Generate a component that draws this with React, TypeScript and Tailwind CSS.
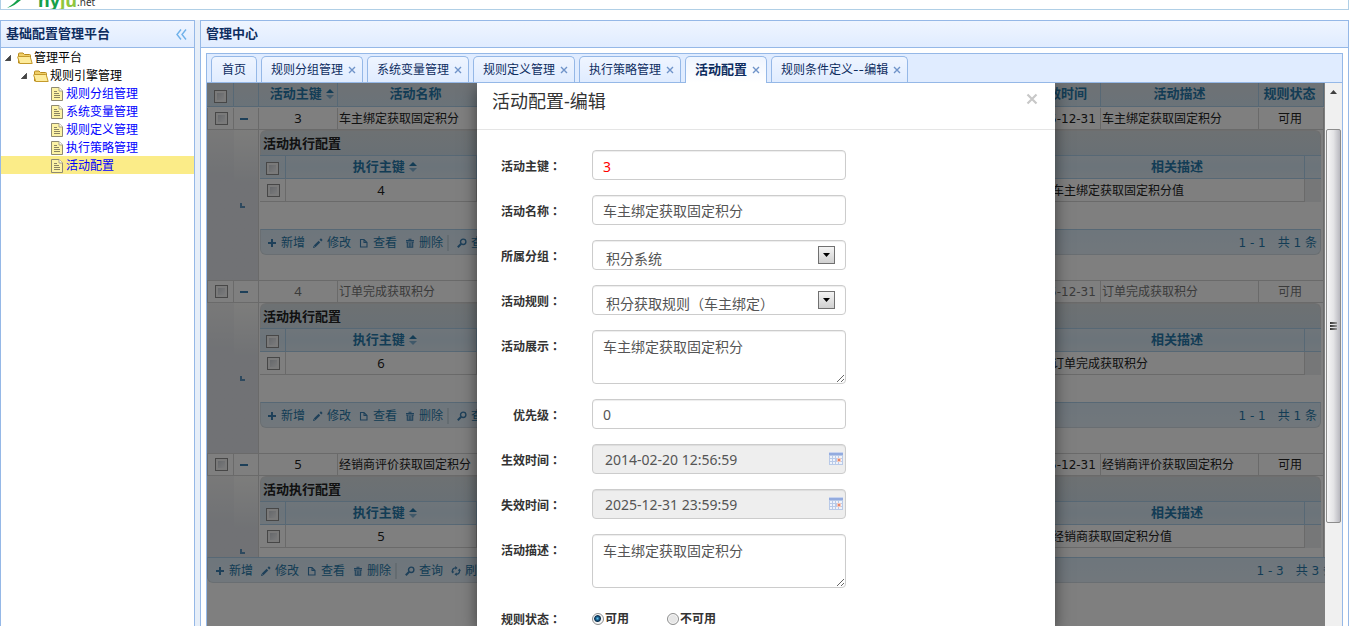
import React from "react";

const CJK = "font-['Noto_Sans','Noto_Sans_CJK_SC',sans-serif]";
const NUM = "font-['DejaVu_Sans','Noto_Sans_CJK_SC',sans-serif]";

type IconName = "plus" | "pencil" | "page" | "trash" | "search" | "refresh";

function ToolIcon({ name }: { name: IconName }) {
  return (
    <svg width="10" height="10" viewBox="0 0 10 10" fill="none" stroke="#3d80b3" className="shrink-0" aria-hidden="true">
      {name === "plus" && <path d="M5 1v8M1 5h8" strokeWidth="2" />}
      {name === "pencil" && (
        <>
          <path d="M1.6 8.4L6.4 3.6" strokeWidth="2.2" />
          <path d="M7.4 2.6L8.8 1.2" strokeWidth="2.4" />
          <path d="M0 10l.6-2.2L2.2 9.4z" fill="#3d80b3" stroke="none" />
        </>
      )}
      {name === "page" && <path d="M1.5 1.5h3.500L8 4.500v4.500h-6.500zM5 1.500v3h3" strokeWidth="1.1" />}
      {name === "trash" && (
        <>
          <path d="M3.5 1.2h3M1 2.5h8M1 4h8" strokeWidth="1.1" />
          <path d="M2.3 4v5.2h5.4V4M4.2 5v4M5.9 5v4" strokeWidth="1.1" />
        </>
      )}
      {name === "search" && (
        <>
          <circle cx="6.2" cy="3.8" r="2.7" strokeWidth="1.4" />
          <path d="M4.2 5.8L.8 9.2" strokeWidth="2" />
        </>
      )}
      {name === "refresh" && (
        <>
          <path d="M4.6 1.8C2 1.9 1 4 1.6 6.2M5.4 8.4C8 8.2 9 6 8.4 3.9" strokeWidth="1.3" />
          <path d="M4.2 0v3.8L6.6 1.9zM5.8 10V6.4L3.4 8.3zM0 5.4h3.4L1.8 7.6zM10 4.8H6.8l1.6-2.2z" fill="#3d80b3" stroke="none" />
        </>
      )}
    </svg>
  );
}

function Tool({ icon, label }: { icon: IconName; label: string }) {
  return (
    <button type="button" className="flex h-5 shrink-0 items-center gap-1 px-1 whitespace-nowrap text-[#2779aa]">
      <ToolIcon name={icon} />
      {label}
    </button>
  );
}

function Pager({ range, total, outer }: { range: string; total: number; outer?: boolean }) {
  return (
    <div
      className={
        "flex h-[26px] items-center rounded-b-md border border-[#d3dde4] border-t-[#aed0ea] bg-linear-to-b from-[#dcecf8] to-[#e3eff8] pt-px text-xs text-[#2779aa] " +
        (outer ? "w-[calc(100%+16px)] pr-1 pl-[3px]" : "pr-[3px] pl-[2px]")
      }
    >
      <Tool icon="plus" label="新增" />
      <Tool icon="pencil" label="修改" />
      <Tool icon="page" label="查看" />
      <Tool icon="trash" label="删除" />
      <span className="mr-1 h-4 w-[2px] bg-[#c9d8e2]" />
      <Tool icon="search" label="查询" />
      <Tool icon="refresh" label="刷新" />
      <div className={"ml-auto flex gap-3 " + NUM}>
        <span>{range}</span>
        <span>{"共 " + total + " 条"}</span>
      </div>
    </div>
  );
}

function Check({ label }: { label: string }) {
  return (
    <input
      type="checkbox"
      aria-label={label}
      className="mx-auto block size-[13px] appearance-none border border-[#8e8f8f] bg-linear-to-br from-[#c3c8d0] to-[#ffffff] shadow-[inset_0_0_0_2px_#f4f4f4]"
    />
  );
}

function Sort() {
  return (
    <svg width="8" height="10" viewBox="0 0 8 10" className="ml-px inline-block" aria-hidden="true">
      <path d="M4 0l4 4H0z" fill="#2779aa" />
      <path d="M4 10L0 6h8z" fill="#7fb0d3" />
    </svg>
  );
}

interface Activity {
  id: number;
  name: string;
  until: string;
  sub: number;
  note: string;
  muted?: boolean;
}

const activities: Activity[] = [
  { id: 3, name: "车主绑定获取固定积分", until: "2025-12-31", sub: 4, note: "车主绑定获取固定积分值" },
  { id: 4, name: "订单完成获取积分", until: "2025-12-31", sub: 6, note: "订单完成获取积分", muted: true },
  { id: 5, name: "经销商评价获取固定积分", until: "2025-12-31", sub: 5, note: "经销商获取固定积分值" },
];

const head = "border-r border-b border-[#aed0ea] text-[13px] leading-[18px] font-bold text-[#2779aa] whitespace-nowrap";
const cell = "border-r border-b border-[#d4d4d4] whitespace-nowrap";

function GridCols() {
  return (
    <colgroup>
      <col className="w-[27px]" />
      <col className="w-[25px]" />
      <col className="w-[79px]" />
      <col className="w-[156px]" />
      <col />
      <col className="w-[79px]" />
      <col className="w-[158px]" />
      <col className="w-[65px]" />
    </colgroup>
  );
}

function SubGrid({ row }: { row: Activity }) {
  return (
    <div className="h-[150px] overflow-hidden pr-[2px] pl-px">
      <div className="h-[25px] rounded-t-md border border-b-0 border-[#ddd] bg-linear-to-b from-[#dbe2e6] to-[#d3e1ea] px-[2px] text-[13px] leading-6 font-bold text-[#222]">
        活动执行配置
      </div>
      <table className="w-full table-fixed border-separate border-spacing-0 text-xs">
        <colgroup>
          <col className="w-[26px]" />
          <col className="w-[191px]" />
          <col />
          <col className="w-[255px]" />
          <col className="w-[16px]" />
        </colgroup>
        <thead>
          <tr className="h-6 bg-linear-to-b from-[#dfebf4] via-[#d7e8f4] to-[#e0ecf5]">
            <th className={head + " border-t px-0 pt-[2px] pb-0"}><Check label="选择全部执行配置" /></th>
            <th className={head + " border-t pt-0 pr-0 pb-[3px] pl-2"}>执行主键 <Sort /></th>
            <th className={head + " border-t p-0"}></th>
            <th className={head + " border-t px-0 pt-0 pb-[3px]"}>相关描述</th>
            <th className="border-t border-b border-[#aed0ea] p-0"></th>
          </tr>
        </thead>
        <tbody>
          <tr className="h-[23px]">
            <td className={cell + " pt-0 pr-0 pb-0 pl-[2px]"}><Check label={"选择执行配置 " + row.sub} /></td>
            <td className={cell + " px-0 pt-[2px] pb-0 text-center text-[13px]"}>{row.sub}</td>
            <td className={cell + " p-0"}></td>
            <td className={cell + " px-[2px] pt-[2px] pb-0"}>{row.note}</td>
            <td className="bg-[#eceef0] p-0"></td>
          </tr>
        </tbody>
      </table>
      <div className="h-[27px]" />
      <Pager range="1 - 1" total={1} />
    </div>
  );
}

function Grid() {
  return (
    <div className="mr-px text-xs text-[#222]">
      <table className="w-full table-fixed border-separate border-spacing-0">
        <GridCols />
        <thead>
          <tr className="h-6 bg-linear-to-b from-[#dde4ea] to-[#d5e6f2]">
            <th className={head + " px-0 pt-1 pb-0"}><Check label="选择全部活动" /></th>
            <th className={head + " p-0"}></th>
            <th className={head + " pt-0 pr-0 pb-[3px] pl-2"}>活动主键 <Sort /></th>
            <th className={head + " px-0 pt-0 pb-[3px]"}>活动名称</th>
            <th className={head + " p-0"}></th>
            <th className={head + " px-0 pt-0 pb-[3px]"}>失效时间</th>
            <th className={head + " px-0 pt-0 pb-[3px]"}>活动描述</th>
            <th className={head + " pt-0 pr-[3px] pb-[3px] pl-0"}>规则状态</th>
          </tr>
        </thead>
      </table>
      <div className="h-[450px] overflow-hidden pt-px">
        <table className="w-full table-fixed border-separate border-spacing-0">
          <GridCols />
          <tbody>
            {activities.map((row) => (
              <React.Fragment key={row.id}>
                <tr className={row.muted ? "h-[22px] text-[#777]" : "h-[22px]"}>
                  <td className={cell + " border-l border-l-[#d4d4d4] pt-0 pr-0 pb-0 pl-px"}><Check label={"选择活动 " + row.id} /></td>
                  <td className={cell + " pt-0 pr-1 pb-0 pl-0"}>
                    <button type="button" aria-label="收起" className="mx-auto block h-[2px] w-2 bg-[#3d80b3]" />
                  </td>
                  <td className={cell + " p-0 text-center text-[13px]"}>{row.id}</td>
                  <td className={cell + " px-px pt-px pb-0"}>{row.name}</td>
                  <td className={cell + " p-0"}></td>
                  <td className={cell + " p-0 text-center " + NUM}>{row.until}</td>
                  <td className={cell + " px-px pt-px pb-0"}>{row.name}</td>
                  <td className={cell + " pt-px pr-[2px] pb-0 pl-0 text-center"}>可用</td>
                </tr>
                <tr>
                  <td className="border-b border-[#d4d4d4] bg-linear-to-b from-[#f2f2f2] to-[#e2e5ea] to-30% p-0"></td>
                  <td className="border-r border-b border-[#d4d4d4] bg-linear-to-b from-[#fafaf8] to-[#e2e5ea] to-35% pt-0 pr-[13px] pb-0 pl-0">
                    <svg width="5" height="5" viewBox="0 0 5 5" className="ml-auto block" aria-hidden="true">
                      <path d="M0 0h2v3h3v2H0z" fill="#5c93bd" />
                    </svg>
                  </td>
                  <td colSpan={6} className="border-r border-b border-[#d4d4d4] p-0">
                    <SubGrid row={row} />
                  </td>
                </tr>
              </React.Fragment>
            ))}
          </tbody>
        </table>
      </div>
      <Pager range="1 - 3" total={3} outer />
    </div>
  );
}

const field =
  "block w-full rounded border border-[#ccc] bg-white px-[10px] text-sm text-[#555] shadow-[inset_0_1px_1px_rgba(0,0,0,0.075)] outline-none";

function Row({ label, id, children }: { label: string; id: string; children: React.ReactNode }) {
  return (
    <div className="flex">
      <label htmlFor={id} className="w-[69px] shrink-0 pt-[6px] text-right text-xs leading-5 font-bold whitespace-nowrap text-[#333]">
        {label}
        <span className="font-['Noto_Sans_CJK_TC',sans-serif]">：</span>
      </label>
      <div className="relative ml-[31px] w-[254px]">{children}</div>
    </div>
  );
}

function SelectBox({ id, value }: { id: string; value: string }) {
  return (
    <>
      <select
        id={id}
        className={field + " h-[30px] appearance-none pt-[5px] pl-[13px] font-['Noto_Sans_CJK_TC','Noto_Sans_CJK_SC',sans-serif]"}
      >
        <option>{value}</option>
      </select>
      <span className="pointer-events-none absolute top-[6px] right-[11px] flex h-[18px] w-[17px] items-center justify-center border border-[#707070] bg-linear-to-b from-[#f4f4f4] to-[#d0d0d0]">
        <svg width="7" height="4" viewBox="0 0 7 4" aria-hidden="true">
          <path d="M0 0h7L3.5 4z" fill="#000" />
        </svg>
      </span>
    </>
  );
}

function DateBox({ id, value }: { id: string; value: string }) {
  return (
    <>
      <input id={id} readOnly defaultValue={value} className={field + " h-[30px] bg-[#eee]! pl-3"} />
      <svg width="14" height="13" viewBox="0 0 14 13" className="pointer-events-none absolute top-2 right-[3px]" aria-hidden="true">
        <path d="M0 0h14v13H0z" fill="#b9cae8" />
        <path d="M0 0h14v3H0z" fill="#93abdf" />
        <path d="M0 0h14v1H0z" fill="#c8d4ef" />
        <path d="M1 4h2v2H1zM4 4h2v2H4zM7 4h2v2H7zM10 4h3v2h-3zM1 7h2v2H1zM4 7h2v2H4zM11 7h2v2h-2zM1 10h2v2H1zM4 10h2v2H4zM7 10h2v2H7zM10 10h3v2h-3z" fill="#eef3fb" />
        <path d="M8 6h4v4H8z" fill="#f3c9bd" />
        <path d="M9 7h2v2H9z" fill="#e8866a" />
      </svg>
    </>
  );
}

function Radio({ id, label, checked }: { id: string; label: string; checked?: boolean }) {
  return (
    <label htmlFor={id} className="flex w-[75px] items-center gap-px text-xs leading-5 font-bold whitespace-nowrap text-[#333]">
      <input
        id={id}
        type="radio"
        name="status"
        defaultChecked={checked}
        className="size-3 appearance-none rounded-full border border-[#8e8f8f] bg-[#e6e6e6] shadow-[inset_0_0_0_1px_#f8f8f8] checked:bg-[radial-gradient(circle_at_45%_45%,#5fc4ee_0,#14507c_2px,#0b2f4d_3px,#f2f2f2_4px)]"
      />
      {label}
    </label>
  );
}

function EditDialog() {
  return (
    <section
      role="dialog"
      aria-labelledby="dialog-title"
      className="absolute inset-y-0 left-1/2 w-[578px] -translate-x-1/2 overflow-visible bg-white shadow-[0_5px_15px_rgba(0,0,0,0.5)]"
    >
      <header className="flex h-[47px] items-start justify-between border-b border-[#e5e5e5] pr-[17px] pl-[15px]">
        <h2 id="dialog-title" className="pt-[6px] text-lg leading-6 text-[#333]">活动配置-编辑</h2>
        <button type="button" aria-label="关闭" className="mt-[10px]">
          <svg width="12" height="12" viewBox="0 0 12 12" aria-hidden="true">
            <path d="M1.5 1.5l9 9M10.500 1.500l-9 9" stroke="#c8c8c8" strokeWidth="2.200" />
          </svg>
        </button>
      </header>
      <form className="flex flex-col gap-[15px] px-[15px] pt-5">
        <Row label="活动主键" id="key">
          <input id="key" readOnly defaultValue="3" className={field + " h-[30px] pt-[2px] text-[#ff0000]!"} />
        </Row>
        <Row label="活动名称" id="name">
          <input id="name" defaultValue="车主绑定获取固定积分" className={field + " h-[30px]"} />
        </Row>
        <Row label="所属分组" id="group">
          <SelectBox id="group" value="积分系统" />
        </Row>
        <Row label="活动规则" id="rule">
          <SelectBox id="rule" value="积分获取规则（车主绑定）" />
        </Row>
        <Row label="活动展示" id="show">
          <textarea id="show" defaultValue="车主绑定获取固定积分" className={field + " h-[54px] py-[6px] leading-5"} />
        </Row>
        <Row label="优先级" id="priority">
          <input id="priority" defaultValue="0" className={field + " h-[30px]"} />
        </Row>
        <Row label="生效时间" id="start">
          <DateBox id="start" value="2014-02-20 12:56:59" />
        </Row>
        <Row label="失效时间" id="end">
          <DateBox id="end" value="2025-12-31 23:59:59" />
        </Row>
        <Row label="活动描述" id="desc">
          <textarea id="desc" defaultValue="车主绑定获取固定积分" className={field + " h-[54px] py-[6px] leading-5"} />
        </Row>
        <Row label="规则状态" id="enabled">
          <div className="flex pt-[6px]">
            <Radio id="enabled" label="可用" checked />
            <Radio id="disabled" label="不可用" />
          </div>
        </Row>
      </form>
    </section>
  );
}

function Tab({ label, active, fixed }: { label: string; active?: boolean; fixed?: boolean }) {
  return (
    <div
      className={
        "flex shrink-0 items-center gap-[5px] rounded-t-[5px] border border-[#95b8e7] text-[#0e2d5f] " +
        (active
          ? "-mb-px h-[27px] border-b-0 bg-linear-to-b from-[#eff5ff] to-white pb-px text-[13px] font-bold "
          : "h-[26px] border-b-0 bg-linear-to-b from-[#eff5ff] to-[#e0ecff] text-xs ") +
        (fixed ? "px-[10px]" : "pr-[6px] pl-[9px]")
      }
    >
      <button type="button" role="tab" aria-selected={!!active} className="whitespace-nowrap">{label}</button>
      {!fixed && (
        <button type="button" aria-label={"关闭 " + label}>
          <svg width="8" height="8" viewBox="0 0 8 8" aria-hidden="true">
            <path d="M1 1l6 6M7 1L1 7" stroke="#6f93c9" strokeWidth="1.4" />
          </svg>
        </button>
      )}
    </div>
  );
}

function ScrollBar() {
  return (
    <div className="flex w-[17px] shrink-0 flex-col items-center bg-[#f0f0f0]" aria-hidden="true">
      <div className="flex h-[46px] items-start pt-[7px]">
        <svg width="7" height="4" viewBox="0 0 7 4">
          <path d="M0 4h7L3.5 0z" fill="#404040" />
        </svg>
      </div>
      <div className="flex h-[394px] w-[15px] flex-col items-center justify-center gap-px rounded-xs border border-[#8c8c8c] bg-linear-to-r from-[#f6f6f6] via-[#e4e4e6] to-[#b8b8bf]">
        <span className="h-[2px] w-[7px] bg-linear-to-r from-[#333] to-[#999]" />
        <span className="h-[2px] w-[7px] bg-linear-to-r from-[#333] to-[#999]" />
        <span className="h-[2px] w-[7px] bg-linear-to-r from-[#333] to-[#999]" />
      </div>
    </div>
  );
}

function Arrow() {
  return (
    <svg width="6" height="6" viewBox="0 0 6 6" className="shrink-0" aria-hidden="true">
      <path d="M5.700 .3v5.400H.3z" fill="#444" stroke="#222" strokeWidth=".6" />
    </svg>
  );
}

function Folder() {
  return (
    <svg width="16" height="14" viewBox="0 0 16 14" className="shrink-0" aria-hidden="true">
      <path d="M1.500 12V3q0-1 1-1h3.500l1.500 1.500h5q1 0 1 1V12z" fill="#f0cf68" stroke="#b88a1d" />
      <path d="M2.800 12.500L.7 6.300q-.2-.8.7-.8h11q.8 0 1 .8l1.800 6.200z" fill="#fdeb9b" stroke="#c49a2c" />
    </svg>
  );
}

function Doc() {
  return (
    <svg width="12" height="14" viewBox="0 0 12 14" className="shrink-0" aria-hidden="true">
      <path d="M.5.5h7.500L11.500 4v9.500H.5z" fill="#fdf3a6" stroke="#8f8a72" />
      <path d="M8 .5V4h3.500" fill="#fff" stroke="#a8a284" />
      <path d="M3 4.500h3M3 6.500h5M3 8.500h6M3 10.500h6" stroke="#8a8462" />
    </svg>
  );
}

const menu = ["规则分组管理", "系统变量管理", "规则定义管理", "执行策略管理", "活动配置"];

const panelHead =
  "flex h-[27px] shrink-0 items-center justify-between border-b border-[#95b8e7] bg-linear-to-b from-[#eff5ff] to-[#e0ecff] px-[5px] text-[13px] font-bold text-[#0e2d5f]";

export default function App() {
  return (
    <div className={"flex h-screen flex-col overflow-hidden bg-white text-xs " + CJK}>
      <header className="flex h-[10px] shrink-0 items-end overflow-hidden border border-t-0 border-[#b0cfe6] pl-[6px]">
        <svg width="31" height="9" viewBox="0 0 31 9" className="shrink-0" aria-hidden="true">
          <path d="M0 8C5 5 8 2 10 0h4C10 3.500 5 7 0 8z" fill="#14a04a" />
        </svg>
        <span className="text-lg leading-[18px] font-bold text-[#14a04a]">
          hy<span className="text-[#8fc63f]">ju</span>
        </span>
        <span className="text-[10px] leading-[14px] text-[#333]">.net</span>
      </header>
      <div className="mt-[10px] flex min-h-0 flex-1">
        <aside className="flex w-[195px] shrink-0 flex-col border border-b-0 border-[#95b8e7]">
          <div className={panelHead}>
            基础配置管理平台
            <button type="button" aria-label="收起菜单" className="pr-[2px]">
              <svg width="11" height="11" viewBox="0 0 11 11" fill="none" stroke="#6fb1ea" strokeWidth="1.400" aria-hidden="true">
                <path d="M5 .5l-4 5 4 5M10 .5l-4 5 4 5" />
              </svg>
            </button>
          </div>
          <nav className="text-xs leading-[18px] text-black">
            <div className="flex h-[18px] items-center gap-[6px] pt-px pl-1">
              <Arrow />
              <span className="flex items-center gap-px"><Folder />管理平台</span>
            </div>
            <div className="flex h-[18px] items-center gap-[6px] pt-px pl-5">
              <Arrow />
              <span className="flex items-center gap-px"><Folder />规则引擎管理</span>
            </div>
            {menu.map((item) => (
              <a
                key={item}
                href="#"
                className={
                  "flex h-[18px] items-center gap-[3px] pt-px pl-[50px] text-[#0000ff] " + (item === "活动配置" ? "bg-[#fbec88]" : "")
                }
              >
                <Doc />
                {item}
              </a>
            ))}
          </nav>
        </aside>
        <div className="w-[5px] shrink-0 bg-[#e6eef8]" />
        <main className="flex min-w-0 flex-1 flex-col border border-b-0 border-[#95b8e7]">
          <div className={panelHead}>管理中心</div>
          <div className="flex min-h-0 flex-1 flex-col px-[5px] pt-[5px]">
            <div className="flex min-h-0 flex-1 flex-col border border-b-0 border-[#95b8e7]">
              <div
                role="tablist"
                className="flex h-[29px] shrink-0 items-end gap-1 border-b border-[#95b8e7] bg-[#e0ecff] px-1 font-['Inter','Noto_Sans_CJK_SC',sans-serif]"
              >
                <Tab label="首页" fixed />
                <Tab label="规则分组管理" />
                <Tab label="系统变量管理" />
                <Tab label="规则定义管理" />
                <Tab label="执行策略管理" />
                <Tab label="活动配置" active />
                <Tab label="规则条件定义--编辑" />
              </div>
              <div className="flex min-h-0 flex-1">
                <div className="relative min-w-0 flex-1 overflow-hidden">
                  <Grid />
                  <div className="absolute inset-0 bg-black/50" />
                  <EditDialog />
                </div>
                <ScrollBar />
              </div>
            </div>
          </div>
        </main>
      </div>
    </div>
  );
}
